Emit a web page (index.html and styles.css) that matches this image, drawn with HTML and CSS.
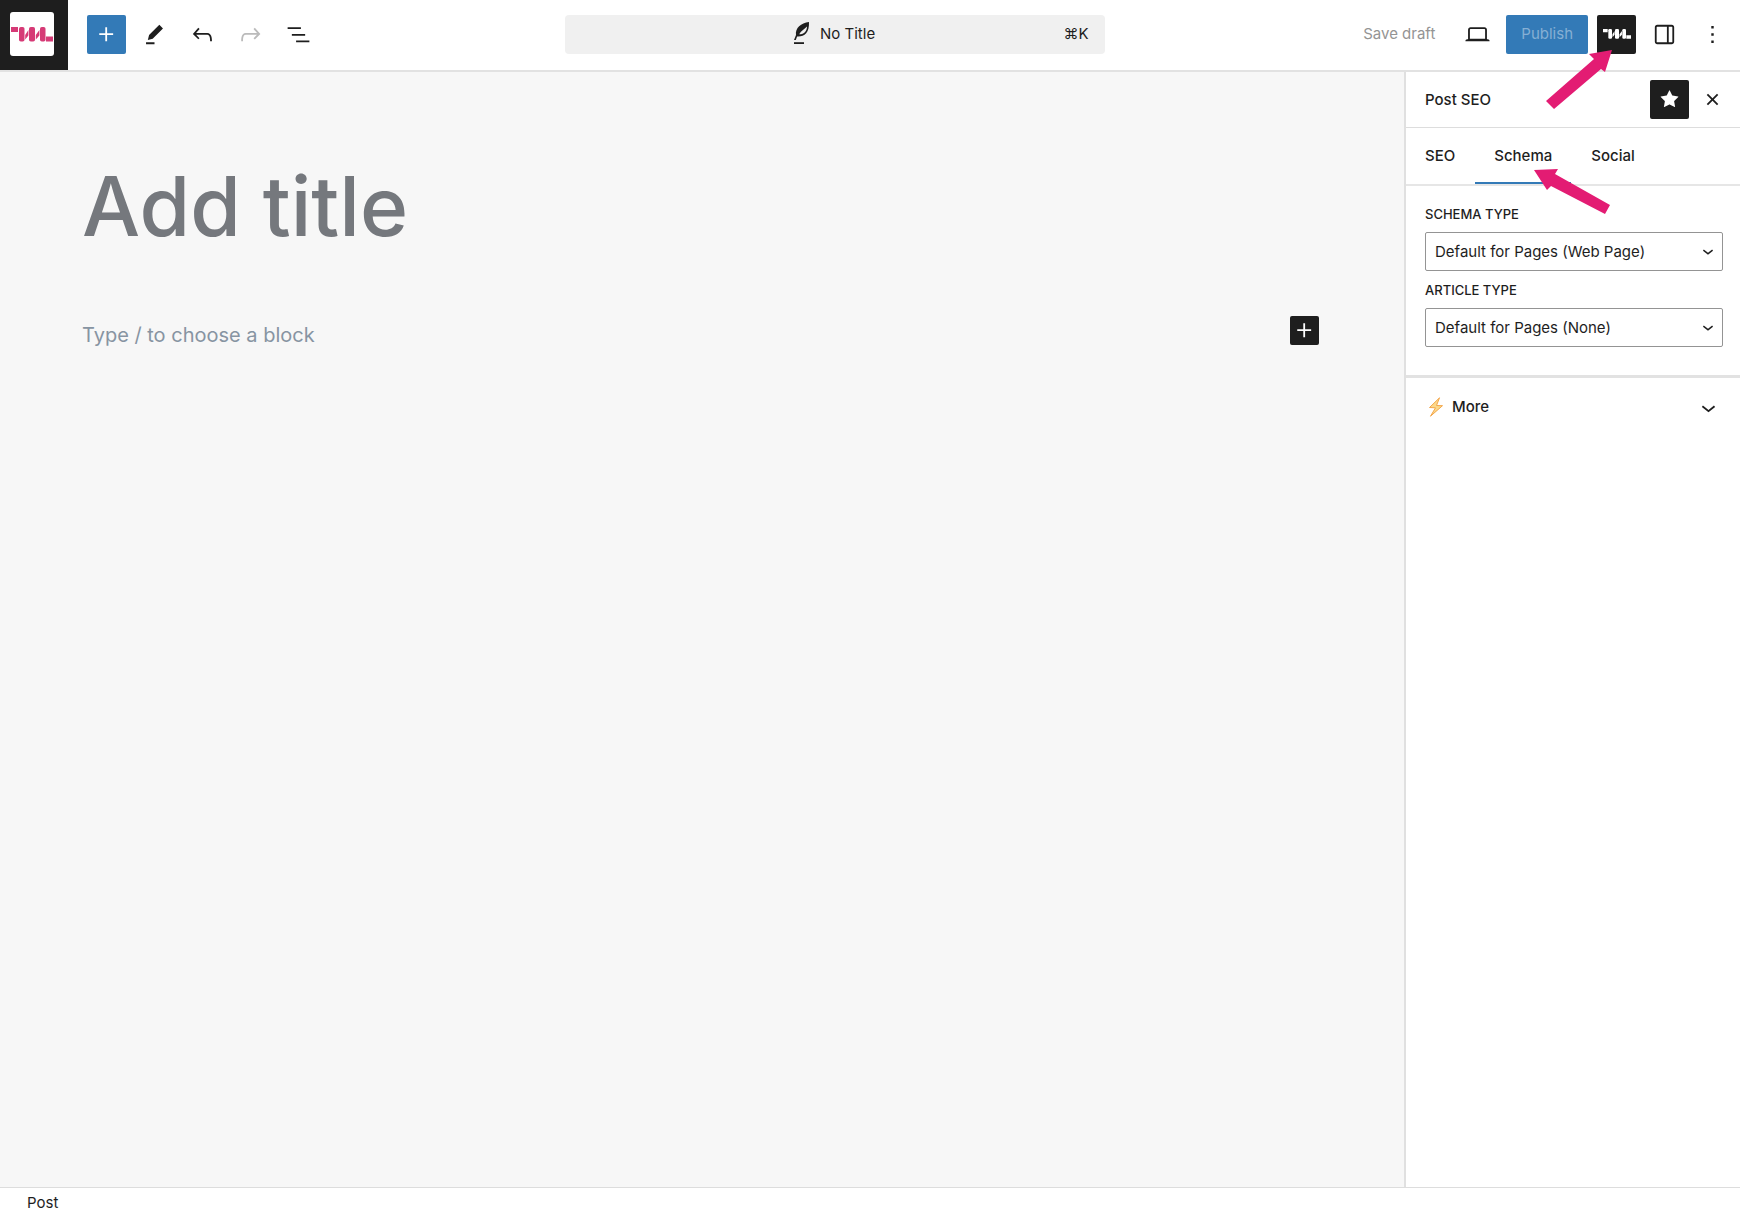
FILE: index.html
```html
<!DOCTYPE html>
<html lang="en">
<head>
    <meta charset="UTF-8">
    <meta name="viewport" content="width=device-width, initial-scale=1.0">
    <title>Add title - Editor</title>
    <link rel="stylesheet" href="styles.css">
</head>
<body>
    <!-- Shared logo shape -->
    <svg class="defs" aria-hidden="true">
        <symbol id="logo" viewBox="0 0 42 15">
            <path d="M0 0h7v5H0zM35 9.500h7v5h-7z"/>
            <rect x="8" y="0" width="5.500" height="14.500" rx="1.800"/>
            <rect x="18" y="0" width="6" height="14.500" rx="1.800"/>
            <rect x="29" y="0" width="5.500" height="14.500" rx="1.800"/>
            <path d="M14.200 12.500V8l3.200-5v5.500zM24.800 12.500V8l3.600-5v5.500z"/>
        </symbol>
    </svg>

    <header class="toolbar">
        <a class="site-logo" href="#" aria-label="View posts">
            <span class="site-icon"><svg><use href="#logo"/></svg></span>
        </a>

        <div class="tools">
            <button class="btn primary" aria-label="Toggle block inserter">
                <svg class="icon" viewBox="0 0 24 24"><path d="M11 12.5V17.5H12.5V12.5H17.5V11H12.5V6H11V11H6V12.5H11Z"/></svg>
            </button>
            <button class="btn" aria-label="Tools">
                <svg class="icon" viewBox="0 0 24 24"><path d="m19 7-3-3-8.5 8.5-1 4 4-1L19 7Zm-7 11.5H5V20h7v-1.5Z"/></svg>
            </button>
            <button class="btn" aria-label="Undo">
                <svg class="icon" viewBox="0 0 24 24"><path d="M18.3 11.7c-.6-.6-1.4-.9-2.3-.9H6.7l2.9-3.3-1.1-1-4.5 5L8.5 16l1-1-2.7-2.7H16c.5 0 .9.2 1.3.5 1 1 1 3.4 1 4.5v.3h1.5v-.2c0-1.5 0-4.3-1.5-5.7z"/></svg>
            </button>
            <button class="btn faded" aria-label="Redo">
                <svg class="icon" viewBox="0 0 24 24"><path d="M15.6 6.5l-1.1 1 2.9 3.3H8c-.9 0-1.7.3-2.3.9-1.4 1.5-1.4 4.2-1.4 5.6v.2h1.5v-.3c0-1.1 0-3.5 1-4.5.3-.3.7-.5 1.3-.5h9.2L14.5 15l1.1 1.1 4.6-4.6-4.6-5z"/></svg>
            </button>
            <button class="btn" aria-label="Document overview">
                <svg class="icon" viewBox="0 0 24 24"><path d="M3 6h11v1.5H3V6Zm3.5 5.5h11V13h-11v-1.5ZM21 17H10v1.5h11V17Z"/></svg>
            </button>
        </div>

        <div class="center">
            <button class="command-bar">
                <span class="command-title">
                    <svg class="quill" viewBox="0 0 16 24"><path fill-rule="evenodd" d="M15 0C7 1 1 6 2 13L0 18h1.800l1.300-3.500C10 15 15.500 11 15 0zM5.200 12.300C7 9 10 7.500 13 4.500c0 4-2.500 7.800-7.800 7.800z"/><path d="M0 20.200h10v1.800H0z"/></svg>
                    No Title
                </span>
                <span class="shortcut">⌘K</span>
            </button>
        </div>

        <div class="actions">
            <button class="save">Save draft</button>
            <button class="btn" aria-label="View">
                <svg class="icon" viewBox="0 0 24 24"><path d="M20.5 16h-.7V8c0-1.1-.9-2-2-2H6.2c-1.1 0-2 .9-2 2v8h-.7c-.8 0-1.5.7-1.5 1.5h20c0-.8-.7-1.5-1.5-1.5zM5.7 8c0-.3.2-.5.5-.5h11.6c.3 0 .5.2.5.5v7.6H5.7V8z"/></svg>
            </button>
            <button class="publish">Publish</button>
            <button class="btn dark" aria-label="Post SEO">
                <svg class="logo-small"><use href="#logo"/></svg>
                <svg class="arrow arrow-up" viewBox="0 0 66 60"><path d="M66 0L43 4l5 5L0 51l8 8 47-40 4 3z"/></svg>
            </button>
            <button class="btn" aria-label="Settings">
                <svg class="icon" viewBox="0 0 24 24"><path d="M18 4H6c-1.1 0-2 .9-2 2v12c0 1.1.9 2 2 2h12c1.1 0 2-.9 2-2V6c0-1.1-.9-2-2-2zm-4 14.5H6c-.3 0-.5-.2-.5-.5V6c0-.3.2-.5.5-.5h8v13zm4.5-.5c0 .3-.2.5-.5.5h-2.500v-13H18c.3 0 .5.2.5.5v12z"/></svg>
            </button>
            <button class="btn" aria-label="Options">
                <svg class="icon" viewBox="0 0 24 24"><path d="M13 19h-2v-2h2v2zm0-6h-2v-2h2v2zm0-6h-2V5h2v2z"/></svg>
            </button>
        </div>
    </header>

    <div class="workspace">
        <main class="canvas">
            <input class="title-input" type="text" placeholder="Add title" aria-label="Add title">
            <div class="block-row">
                <input class="block-input" type="text" placeholder="Type / to choose a block" aria-label="Block">
                <button class="add-block" aria-label="Add block">
                    <svg class="icon" viewBox="0 0 24 24"><path d="M11 12.5V17.5H12.5V12.5H17.5V11H12.5V6H11V11H6V12.5H11Z"/></svg>
                </button>
            </div>
        </main>

        <aside class="sidebar">
            <div class="sidebar-header">
                <h2>Post SEO</h2>
                <button class="btn dark" aria-label="Unpin from toolbar">
                    <svg class="icon" viewBox="0 0 24 24"><path d="M11.776 4.454a.25.25 0 01.448 0l2.069 4.192a.25.25 0 00.188.137l4.626.672a.25.25 0 01.139.426l-3.348 3.263a.25.25 0 00-.072.222l.79 4.607a.25.25 0 01-.362.263l-4.138-2.175a.25.25 0 00-.232 0l-4.138 2.175a.25.25 0 01-.363-.263l.79-4.607a.25.25 0 00-.071-.222L4.754 9.881a.25.25 0 01.139-.426l4.626-.672a.25.25 0 00.188-.137l2.069-4.192z"/></svg>
                </button>
                <button class="btn" aria-label="Close">
                    <svg class="icon" viewBox="0 0 24 24"><path d="M12 13.06l3.712 3.713 1.061-1.06L13.061 12l3.712-3.712-1.06-1.06L12 10.938 8.288 7.227l-1.061 1.06L10.939 12l-3.712 3.712 1.06 1.061L12 13.061z"/></svg>
                </button>
            </div>

            <div class="tabs" role="tablist">
                <button class="tab" role="tab">SEO</button>
                <button class="tab active" role="tab" aria-selected="true">Schema
                    <svg class="arrow arrow-left" viewBox="0 0 76 46"><path d="M0 1l24-1-3 5 55 31-5 9-54-28-4 4z"/></svg>
                </button>
                <button class="tab" role="tab">Social</button>
            </div>

            <div class="fields">
                <label for="schema-type">Schema type</label>
                <div class="select-wrap">
                    <select id="schema-type">
                        <option>Default for Pages (Web Page)</option>
                    </select>
                    <svg class="chevron" viewBox="0 0 24 24"><path d="M17.5 11.6L12 16l-5.5-4.4.9-1.2L12 14l4.5-3.6 1 1.2z"/></svg>
                </div>
                <label for="article-type">Article type</label>
                <div class="select-wrap">
                    <select id="article-type">
                        <option>Default for Pages (None)</option>
                    </select>
                    <svg class="chevron" viewBox="0 0 24 24"><path d="M17.5 11.6L12 16l-5.5-4.4.9-1.2L12 14l4.5-3.6 1 1.2z"/></svg>
                </div>
            </div>

            <button class="more">
                <svg class="bolt" viewBox="0 0 16 20"><path d="M11.500.8L1.500 10.500l6 .3-5 8.400L14.500 8.700l-6-.2z"/></svg>
                <span>More</span>
                <svg class="icon" viewBox="0 0 24 24"><path d="M17.5 11.6L12 16l-5.5-4.4.9-1.2L12 14l4.5-3.6 1 1.2z"/></svg>
            </button>
        </aside>
    </div>

    <footer class="footer">Post</footer>
</body>
</html>
```

FILE: styles.css
```css
* {
    box-sizing: border-box;
}

body {
    margin: 0;
    height: 100vh;
    display: flex;
    flex-direction: column;
    overflow: hidden;
    background-color: #fff;
    color: #1e1e1e;
    font-family: Inter, "Liberation Sans", sans-serif;
    font-size: 15px;
    line-height: 20px;
}

button,
input,
select {
    font: inherit;
    color: inherit;
    margin: 0;
    padding: 0;
    border: none;
    background: none;
}

button {
    cursor: pointer;
}

svg {
    display: block;
    fill: currentColor;
}

.defs {
    position: absolute;
    width: 0;
    height: 0;
}

.icon {
    width: 29px;
    height: 29px;
}

.btn {
    position: relative;
    flex: none;
    display: flex;
    align-items: center;
    justify-content: center;
    width: 39px;
    height: 39px;
    border-radius: 2px;
}

.primary {
    background-color: #337ab7;
    color: #fff;
}

.dark {
    background-color: #1e1e1e;
    color: #fff;
}

.faded {
    color: #bbb;
}

/* Top toolbar */
.toolbar {
    flex: none;
    display: flex;
    align-items: center;
    height: 72px;
    padding-right: 8px;
    border-bottom: 2px solid #e2e2e2;
}

.site-logo {
    flex: none;
    display: flex;
    align-items: center;
    width: 68px;
    height: 70px;
    padding: 0 10px 2px;
    background-color: #1e1e1e;
}

.site-icon {
    display: flex;
    align-items: center;
    justify-content: center;
    width: 44px;
    height: 44px;
    border-radius: 3px;
    background-color: #fff;
    color: #d63a76;
}

.site-icon svg {
    width: 42px;
    height: 15px;
}

.tools,
.center,
.actions {
    display: flex;
    align-items: center;
    gap: 9px;
    padding-bottom: 2px;
}

.tools {
    padding-left: 19px;
}

.center {
    flex: 1;
    justify-content: center;
    min-width: 0;
}

.command-bar {
    display: grid;
    grid-template-columns: 1fr auto 1fr;
    align-items: center;
    width: 100%;
    max-width: 540px;
    height: 39px;
    padding: 0 16px;
    border-radius: 4px;
    background-color: #f0f0f0;
}

.command-title {
    grid-column: 2;
    display: flex;
    align-items: center;
    gap: 10px;
}

.quill {
    width: 16px;
    height: 24px;
}

.shortcut {
    justify-self: end;
}

.save {
    padding: 0 14px 0 12px;
    color: #949494;
    white-space: nowrap;
}

.publish {
    height: 39px;
    padding: 0 15px;
    border-radius: 2px;
    background-color: #337ab7;
    color: #85afd4;
}

.logo-small {
    width: 28px;
    height: 10px;
}

/* Pointer arrows drawn over the controls */
.arrow {
    position: absolute;
    z-index: 2;
    fill: #e31c73;
    pointer-events: none;
}

.arrow-up {
    top: 35px;
    right: 24px;
    width: 66px;
    height: 60px;
}

.arrow-left {
    top: 41px;
    left: 59px;
    width: 76px;
    height: 46px;
}

/* Editor area */
.workspace {
    flex: 1;
    display: flex;
    min-height: 0;
}

.canvas {
    flex: 1;
    min-width: 0;
    padding: 78px 85px 0 82px;
    background-color: #f7f7f7;
}

.title-input {
    display: block;
    width: 100%;
    height: 112px;
    font-size: 82px;
    font-weight: 500;
}

.title-input::placeholder {
    color: #75787d;
    opacity: 1;
}

.block-row {
    display: flex;
    align-items: center;
    margin-top: 54px;
}

.block-input {
    flex: 1;
    height: 38px;
    font-size: 20px;
}

.block-input::placeholder {
    color: #8794a2;
    opacity: 1;
}

.add-block {
    display: flex;
    margin-bottom: 9px;
    border-radius: 2px;
    background-color: #1e1e1e;
    color: #fff;
}

/* Settings sidebar */
.sidebar {
    flex: none;
    width: 336px;
    border-left: 2px solid #e0e0e0;
}

.sidebar-header {
    display: flex;
    align-items: center;
    gap: 4px;
    height: 56px;
    padding: 0 8px 0 19px;
    border-bottom: 1px solid #ddd;
}

.sidebar-header h2 {
    flex: 1;
    margin: 0;
    font-size: 15px;
    font-weight: 500;
}

.tabs {
    display: flex;
    gap: 1px;
    height: 58px;
    border-bottom: 2px solid #e6e6e6;
}

.tab {
    position: relative;
    padding: 0 19px;
    font-weight: 500;
}

.active {
    box-shadow: inset 0 -2px #337ab7;
}

.fields {
    padding: 18px 17px 28px 19px;
    border-bottom: 3px solid #e2e2e2;
}

.fields label {
    display: block;
    height: 28px;
    font-size: 13px;
    font-weight: 500;
    text-transform: uppercase;
}

.select-wrap {
    position: relative;
    margin-bottom: 9px;
}

.select-wrap:last-child {
    margin-bottom: 0;
}

select {
    appearance: none;
    width: 100%;
    height: 39px;
    padding: 0 36px 0 9px;
    border: 1px solid #949494;
    border-radius: 2px;
}

.chevron {
    position: absolute;
    top: 8px;
    right: 4px;
    width: 22px;
    height: 22px;
    pointer-events: none;
}

.more {
    display: flex;
    align-items: center;
    width: 100%;
    height: 58px;
    padding: 0 17px 0 22px;
    font-weight: 500;
    text-align: left;
}

.more span {
    flex: 1;
    padding-left: 8px;
}

.bolt {
    width: 16px;
    height: 20px;
    fill: #fbd98a;
    stroke: #f3a64b;
}

/* Bottom breadcrumb */
.footer {
    flex: none;
    height: 25px;
    padding: 5px 27px 0;
    border-top: 1px solid #ddd;
    line-height: 20px;
}
```
